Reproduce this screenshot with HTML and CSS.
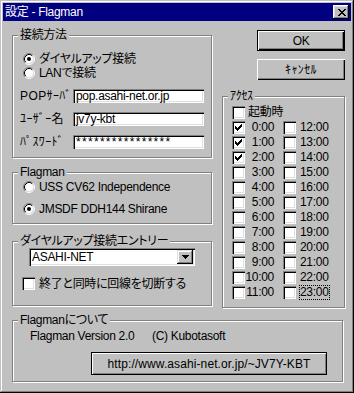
FILE: index.html
```html
<!DOCTYPE html>
<html lang="ja">
<head>
<meta charset="utf-8">
<title>設定 - Flagman</title>
<link rel="stylesheet" href="styles.css">
</head>
<body>
<div class="window">
  <div class="titlebar">
    <span class="title">設定 - Flagman</span>
    <span class="close-btn"><svg width="8" height="7" viewBox="0 0 8 7"><path d="M0 0h2v1H0z M6 0h2v1H6z M1 1h2v1H1z M5 1h2v1H5z M2 2h4v1H2z M3 3h2v1H3z M2 4h4v1H2z M1 5h2v1H1z M5 5h2v1H5z M0 6h2v1H0z M6 6h2v1H6z" fill="#000"/></svg></span>
  </div>
  <div class="main">
    <div class="left-col">
      <div class="group g-conn">
        <span class="group-title">接続方法</span>
        <div class="radio-row">
          <svg class="radio" width="12" height="12" viewBox="0 0 12 12"><circle cx="6" cy="6" r="4.5" fill="#fff"/><path d="M2.11 9.89A5.5 5.5 0 0 1 9.89 2.11" fill="none" stroke="#808080"/><path d="M9.89 2.11A5.5 5.5 0 0 1 2.11 9.89" fill="none" stroke="#fff"/><path d="M2.82 9.18A4.5 4.5 0 0 1 9.18 2.82" fill="none" stroke="#000"/><path d="M9.18 2.82A4.5 4.5 0 0 1 2.82 9.18" fill="none" stroke="#dfdfdf"/><circle cx="6" cy="6" r="2" fill="#000"/></svg>
          <span class="lbl">ダイヤルアップ接続</span>
        </div>
        <div class="radio-row">
          <svg class="radio" width="12" height="12" viewBox="0 0 12 12"><circle cx="6" cy="6" r="4.5" fill="#fff"/><path d="M2.11 9.89A5.5 5.5 0 0 1 9.89 2.11" fill="none" stroke="#808080"/><path d="M9.89 2.11A5.5 5.5 0 0 1 2.11 9.89" fill="none" stroke="#fff"/><path d="M2.82 9.18A4.5 4.5 0 0 1 9.18 2.82" fill="none" stroke="#000"/><path d="M9.18 2.82A4.5 4.5 0 0 1 2.82 9.18" fill="none" stroke="#dfdfdf"/></svg>
          <span class="lbl">LANで接続</span>
        </div>
        <div class="field-row first">
          <span class="field-lbl">POPｻｰﾊﾞ</span>
          <span class="edit">pop.asahi-net.or.jp</span>
        </div>
        <div class="field-row">
          <span class="field-lbl">ﾕｰｻﾞｰ名</span>
          <span class="edit">jv7y-kbt</span>
        </div>
        <div class="field-row">
          <span class="field-lbl">ﾊﾟｽﾜｰﾄﾞ</span>
          <span class="edit pw">****************</span>
        </div>
      </div>

      <div class="group g-flag">
        <span class="group-title">Flagman</span>
        <div class="radio-row">
          <svg class="radio" width="12" height="12" viewBox="0 0 12 12"><circle cx="6" cy="6" r="4.5" fill="#fff"/><path d="M2.11 9.89A5.5 5.5 0 0 1 9.89 2.11" fill="none" stroke="#808080"/><path d="M9.89 2.11A5.5 5.5 0 0 1 2.11 9.89" fill="none" stroke="#fff"/><path d="M2.82 9.18A4.5 4.5 0 0 1 9.18 2.82" fill="none" stroke="#000"/><path d="M9.18 2.82A4.5 4.5 0 0 1 2.82 9.18" fill="none" stroke="#dfdfdf"/></svg>
          <span class="lbl">USS CV62 Independence</span>
        </div>
        <div class="radio-row second">
          <svg class="radio" width="12" height="12" viewBox="0 0 12 12"><circle cx="6" cy="6" r="4.5" fill="#fff"/><path d="M2.11 9.89A5.5 5.5 0 0 1 9.89 2.11" fill="none" stroke="#808080"/><path d="M9.89 2.11A5.5 5.5 0 0 1 2.11 9.89" fill="none" stroke="#fff"/><path d="M2.82 9.18A4.5 4.5 0 0 1 9.18 2.82" fill="none" stroke="#000"/><path d="M9.18 2.82A4.5 4.5 0 0 1 2.82 9.18" fill="none" stroke="#dfdfdf"/><circle cx="6" cy="6" r="2" fill="#000"/></svg>
          <span class="lbl">JMSDF DDH144 Shirane</span>
        </div>
      </div>

      <div class="group g-dial">
        <span class="group-title">ダイヤルアップ接続エントリー</span>
        <div class="combo">
          <span class="combo-text">ASAHI-NET</span>
          <span class="combo-btn"><svg width="7" height="4" viewBox="0 0 7 4"><path d="M0 0h7v1H0z M1 1h5v1H1z M2 2h3v1H2z M3 3h1v1H3z" fill="#000"/></svg></span>
        </div>
        <div class="check-row">
          <span class="cb"></span>
          <span class="lbl">終了と同時に回線を切断する</span>
        </div>
      </div>
    </div>

    <div class="right-col">
      <div class="btn btn-default">OK</div>
      <div class="btn btn-cancel">ｷｬﾝｾﾙ</div>
      <div class="group g-access">
        <span class="group-title">ｱｸｾｽ</span>
        <div class="acc-row">
          <span class="cb"></span><span class="start-lbl">起動時</span>
        </div>
        <div class="acc-row">
          <span class="cb"><svg width="7" height="7" viewBox="0 0 7 7"><path d="M6 0h1v1H6z M5 1h2v1H5z M0 2h1v1H0z M4 2h3v1H4z M0 3h2v1H0z M3 3h3v1H3z M0 4h5v1H0z M1 5h3v1H1z M2 6h1v1H2z" fill="#000"/></svg></span><span class="time">0:00</span>
          <span class="cb cb2"></span><span class="time2">12:00</span>
        </div>
        <div class="acc-row">
          <span class="cb"><svg width="7" height="7" viewBox="0 0 7 7"><path d="M6 0h1v1H6z M5 1h2v1H5z M0 2h1v1H0z M4 2h3v1H4z M0 3h2v1H0z M3 3h3v1H3z M0 4h5v1H0z M1 5h3v1H1z M2 6h1v1H2z" fill="#000"/></svg></span><span class="time">1:00</span>
          <span class="cb cb2"></span><span class="time2">13:00</span>
        </div>
        <div class="acc-row">
          <span class="cb"><svg width="7" height="7" viewBox="0 0 7 7"><path d="M6 0h1v1H6z M5 1h2v1H5z M0 2h1v1H0z M4 2h3v1H4z M0 3h2v1H0z M3 3h3v1H3z M0 4h5v1H0z M1 5h3v1H1z M2 6h1v1H2z" fill="#000"/></svg></span><span class="time">2:00</span>
          <span class="cb cb2"></span><span class="time2">14:00</span>
        </div>
        <div class="acc-row"><span class="cb"></span><span class="time">3:00</span><span class="cb cb2"></span><span class="time2">15:00</span></div>
        <div class="acc-row"><span class="cb"></span><span class="time">4:00</span><span class="cb cb2"></span><span class="time2">16:00</span></div>
        <div class="acc-row"><span class="cb"></span><span class="time">5:00</span><span class="cb cb2"></span><span class="time2">17:00</span></div>
        <div class="acc-row"><span class="cb"></span><span class="time">6:00</span><span class="cb cb2"></span><span class="time2">18:00</span></div>
        <div class="acc-row"><span class="cb"></span><span class="time">7:00</span><span class="cb cb2"></span><span class="time2">19:00</span></div>
        <div class="acc-row"><span class="cb"></span><span class="time">8:00</span><span class="cb cb2"></span><span class="time2">20:00</span></div>
        <div class="acc-row"><span class="cb"></span><span class="time">9:00</span><span class="cb cb2"></span><span class="time2">21:00</span></div>
        <div class="acc-row"><span class="cb"></span><span class="time">10:00</span><span class="cb cb2"></span><span class="time2">22:00</span></div>
        <div class="acc-row"><span class="cb"></span><span class="time">11:00</span><span class="cb cb2"></span><span class="time2 focus">23:00</span></div>
      </div>
    </div>
  </div>

  <div class="group g-about">
    <span class="group-title">Flagmanについて</span>
    <div class="about-row">
      <span class="ver">Flagman Version 2.0</span>
      <span class="copy">(C) Kubotasoft</span>
    </div>
    <div class="url-box">http://www.asahi-net.or.jp/~JV7Y-KBT</div>
  </div>
</div>
</body>
</html>
```

FILE: styles.css
```css
* {
  box-sizing: border-box;
}

html,
body {
  margin: 0;
  padding: 0;
}

body {
  background: #c0c0c0;
  color: #000;
  font-family: "Liberation Sans", "Noto Sans CJK JP", sans-serif;
  font-size: 12px;
  line-height: 14px;
  letter-spacing: -0.3px;
  font-feature-settings: "palt";
}

.window {
  width: 354px;
  height: 393px;
  padding: 3px;
  background: #c0c0c0;
  box-shadow: inset -1px -1px 0 #000, inset 1px 1px 0 #c0c0c0,
    inset -2px -2px 0 #808080, inset 2px 2px 0 #fff;
}

/* title bar */
.titlebar {
  height: 18px;
  background: #000080;
  color: #fff;
  display: flex;
  align-items: center;
  justify-content: space-between;
  padding: 0 2px;
}

.title {
  line-height: 16px;
  white-space: nowrap;
}

.close-btn {
  width: 16px;
  height: 14px;
  background: #c0c0c0;
  display: flex;
  align-items: center;
  justify-content: center;
  padding-left: 1px;
  box-shadow: inset -1px -1px 0 #000, inset 1px 1px 0 #fff,
    inset -2px -2px 0 #808080, inset 2px 2px 0 #dfdfdf;
}

.close-btn svg,
.cb svg,
.combo-btn svg,
.radio {
  display: block;
  flex: none;
}

/* layout */
.main {
  display: flex;
  padding-left: 9px;
}

.left-col {
  width: 201px;
  display: flex;
  flex-direction: column;
}

.right-col {
  width: 123px;
  margin-left: 9px;
  display: flex;
  flex-direction: column;
}

/* group boxes */
.group {
  position: relative;
  border: 1px solid #808080;
  box-shadow: 1px 1px 0 #fff, inset 1px 1px 0 #fff;
}

.left-col .group {
  width: 200px;
}

.group-title {
  position: absolute;
  top: -8px;
  left: 5px;
  padding: 0 2px;
  background: #c0c0c0;
  line-height: 14px;
  white-space: nowrap;
}

.g-conn {
  margin-top: 14px;
  height: 123px;
  padding: 16px 0 0 7px;
}

.g-flag {
  margin-top: 14px;
  height: 52px;
  padding: 7px 0 0 10px;
}

.g-dial {
  margin-top: 17px;
  height: 65px;
  padding: 6px 0 0 9px;
}

.g-access {
  margin-top: 16px;
  height: 212px;
  width: 123px;
  padding: 8px 0 0 9px;
}

.g-about {
  margin: 12px 0 0 9px;
  width: 331px;
  height: 62px;
  padding: 8px 0 0 17px;
}

/* radios */
.radio-row {
  display: flex;
  align-items: center;
  height: 14px;
  white-space: nowrap;
}

.g-conn .radio-row {
  padding-left: 3px;
}

.g-flag .radio-row.second {
  margin-top: 8px;
}

.radio-row .lbl {
  margin-left: 4px;
}

/* edit fields */
.field-row {
  display: flex;
  align-items: center;
  height: 14px;
  margin-top: 9px;
}

.field-lbl {
  width: 53px;
  white-space: nowrap;
  letter-spacing: 0.4px;
}

.edit {
  width: 131px;
  height: 14px;
  background: #fff;
  padding-left: 3px;
  line-height: 14px;
  overflow: hidden;
  white-space: nowrap;
  box-shadow: inset 1px 1px 0 #808080, inset 2px 2px 0 #000,
    inset -1px -1px 0 #fff, inset -2px -2px 0 #dfdfdf;
}

.edit.pw {
  letter-spacing: 1.3px;
  line-height: 15px;
}

/* combo */
.combo {
  margin-left: 7px;
  width: 166px;
  height: 18px;
  background: #fff;
  display: flex;
  align-items: center;
  justify-content: space-between;
  padding: 2px;
  box-shadow: inset 1px 1px 0 #808080, inset 2px 2px 0 #000,
    inset -1px -1px 0 #fff, inset -2px -2px 0 #dfdfdf;
}

.combo-text {
  padding-left: 1px;
  line-height: 14px;
}

.combo-btn {
  width: 16px;
  height: 14px;
  background: #c0c0c0;
  display: flex;
  align-items: center;
  justify-content: center;
  box-shadow: inset -1px -1px 0 #000, inset 1px 1px 0 #dfdfdf,
    inset -2px -2px 0 #808080, inset 2px 2px 0 #fff;
}

/* checkboxes */
.cb {
  width: 13px;
  height: 13px;
  flex: none;
  background: #fff;
  padding: 3px;
  box-shadow: inset 1px 1px 0 #808080, inset 2px 2px 0 #000,
    inset -1px -1px 0 #fff, inset -2px -2px 0 #dfdfdf;
}

.check-row {
  display: flex;
  align-items: center;
  height: 13px;
  margin-top: 11px;
  white-space: nowrap;
}

.check-row .lbl {
  margin-left: 4px;
}

/* access grid */
.acc-row {
  display: flex;
  align-items: center;
  height: 15px;
  line-height: 13px;
  white-space: nowrap;
}

.start-lbl {
  margin-left: 3px;
}

.time {
  width: 29px;
  text-align: right;
}

.cb2 {
  margin-left: 9px;
}

.time2 {
  margin-left: 4px;
}

.time2.focus {
  outline: 1px dotted #000;
  outline-offset: 0;
}

/* buttons */
.btn {
  width: 88px;
  height: 21px;
  margin-left: 35px;
  display: flex;
  align-items: center;
  justify-content: center;
}

.btn-default {
  margin-top: 9px;
  border: 1px solid #000;
  box-shadow: inset 1px 1px 0 #fff, inset -1px -1px 0 #000,
    inset -2px -2px 0 #808080;
}

.btn-cancel {
  margin-top: 8px;
  letter-spacing: 0.4px;
  box-shadow: inset 1px 1px 0 #fff, inset -1px -1px 0 #000,
    inset -2px -2px 0 #808080;
}

/* about */
.about-row {
  display: flex;
  align-items: center;
  height: 14px;
  white-space: nowrap;
}

.ver {
  width: 122px;
}

.url-box {
  margin: 9px 0 0 61px;
  width: 236px;
  height: 23px;
  display: flex;
  align-items: center;
  justify-content: center;
  letter-spacing: 0.1px;
  border: 1px solid #000;
  box-shadow: inset 1px 1px 0 #fff, inset -1px -1px 0 #808080;
}
```
